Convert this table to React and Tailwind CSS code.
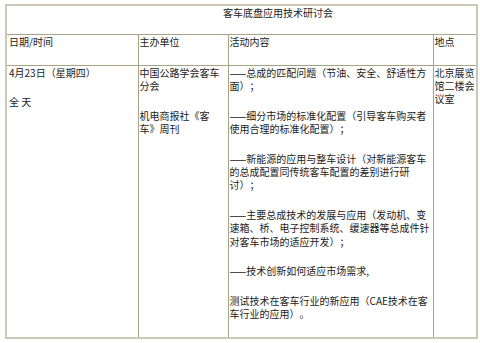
export default function App() {
  const font = { fontFamily: '"Noto Sans CJK SC", "Noto Sans", sans-serif' };
  const cell = "border border-[#a8a286] align-top text-left font-normal";
  const para = "mb-[16.2px] last:mb-0";

  return (
    <div className="w-[480px] h-[343px] bg-white pt-[4px] pl-[5px] [text-spacing-trim:space-all]" style={font}>
      <table className="table-fixed border-collapse border-2 border-[#ccc8b6] w-[473px] text-[10px] leading-[13.4px] text-[#222]">
        <colgroup>
          <col className="w-[132px]" />
          <col className="w-[90px]" />
          <col className="w-[205px]" />
          <col />
        </colgroup>
        <tbody>
          <tr className="h-[29px]">
            <td colSpan={4} className={`${cell} pl-[216px] pt-0`}>
              客车底盘应用技术研讨会
            </td>
          </tr>
          <tr className="h-[31px]">
            <td className={`${cell} pl-[2px] pt-0`}>日期/时间</td>
            <td className={`${cell} pl-[1px] pt-0`}>主办单位</td>
            <td className={`${cell} pl-[1px] pt-0`}>活动内容</td>
            <td className={`${cell} pl-[1px] pt-0`}>地点</td>
          </tr>
          <tr className="h-[273px]">
            <td className={`${cell} pl-[2px] pt-0`}>
              <p className={para}>4月23日（星期四）</p>
              <p className={para}>全 天</p>
            </td>
            <td className={`${cell} pl-[1px] pt-0`}>
              <p className={para}>中国公路学会客车分会</p>
              <p className={para}>机电商报社《客车》周刊</p>
            </td>
            <td className={`${cell} pl-[1px] pt-0`}>
              <p className={para}>——总成的匹配问题（节油、安全、舒适性方面）；</p>
              <p className={para}>——细分市场的标准化配置（引导客车购买者使用合理的标准化配置）；</p>
              <p className={para}>——新能源的应用与整车设计（对新能源客车的总成配置同传统客车配置的差别进行研讨）；</p>
              <p className={para}>——主要总成技术的发展与应用（发动机、变速箱、桥、电子控制系统、缓速器等总成件针对客车市场的适应开发）；</p>
              <p className={para}>——技术创新如何适应市场需求,</p>
              <p className={para}>测试技术在客车行业的新应用（CAE技术在客车行业的应用）。</p>
            </td>
            <td className={`${cell} pl-[1px] pt-0`}>
              <p className={para}>北京展览馆二楼会议室</p>
            </td>
          </tr>
        </tbody>
      </table>
    </div>
  );
}
